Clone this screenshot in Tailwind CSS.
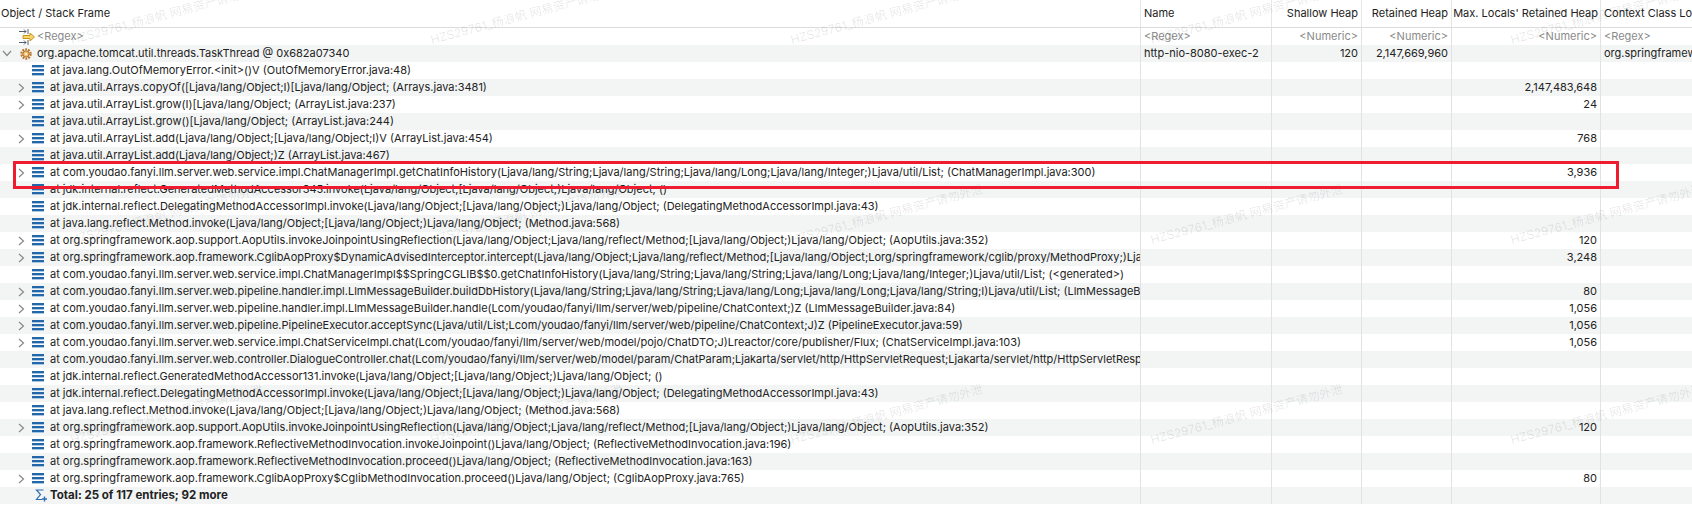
<!DOCTYPE html>
<html lang="en">
<head>
    <meta charset="UTF-8"/>
    <title>Thread Overview</title>
    <script src="https://cdn.jsdelivr.net/npm/@tailwindcss/browser@4"></script>
</head>
<body class="bg-white overflow-hidden">
<div class="relative w-[1692px] h-[506px] overflow-hidden font-['Inter','Noto_Sans_CJK_SC',sans-serif] text-[11px] text-[#222]">
    <!-- Header -->
    <div class="grid grid-cols-[1141px_131px_90px_90px_149px_91px] h-[28px] border-b border-[#dcdcdc]">
        <div class="flex items-center pl-[1px] border-r border-[#e6e6e6] whitespace-nowrap">Object / Stack Frame</div>
        <div class="flex items-center pl-[3px] border-r border-[#e6e6e6] whitespace-nowrap">Name</div>
        <div class="flex items-center justify-end pr-[3px] border-r border-[#e6e6e6] whitespace-nowrap">Shallow Heap</div>
        <div class="flex items-center justify-end pr-[3px] border-r border-[#e6e6e6] whitespace-nowrap">Retained Heap</div>
        <div class="flex items-center justify-end pr-[2px] border-r border-[#e6e6e6] whitespace-nowrap">Max. Locals' Retained Heap</div>
        <div class="flex items-center pl-[3px] overflow-hidden whitespace-nowrap">Context Class Loader</div>
    </div>

    <div class="rows"></div>

    <!-- Watermarks -->
    <div class="watermarks absolute inset-0 pointer-events-none"></div>

    <!-- Red highlight box -->
    <div class="absolute left-[13px] top-[161px] w-[1606px] h-[28px] border-[3px] border-[#ee1c2e]"></div>
</div>

<script>
    const listIcon = `<svg width="12" height="11" viewBox="0 0 12 11" class="shrink-0"><g fill="#2467a8"><rect width="12" height="2"/><rect y="4" width="12" height="2"/><rect y="8" width="12" height="2"/></g><g fill="#a9c6e2"><rect y="2" width="12" height="1"/><rect y="6" width="12" height="1"/><rect y="10" width="12" height="1"/></g></svg>`;
    const chevronRight = `<svg width="7" height="10" viewBox="0 0 7 10" class="block"><path d="M1 1l4.5 4L1 9" fill="none" stroke="#888" stroke-width="1.2"/></svg>`;
    const chevronDown = `<svg width="10" height="7" viewBox="0 0 10 7" class="block"><path d="M1 1l4 4.5L9 1" fill="none" stroke="#888" stroke-width="1.2"/></svg>`;
    const gearIcon = `<svg width="12" height="12" viewBox="0 0 12 12" class="shrink-0"><circle cx="6" cy="6" r="4.6" fill="none" stroke="#b9772b" stroke-width="2.2" stroke-dasharray="1.8 1.1"/><circle cx="6" cy="6" r="3.2" fill="#f0c070" stroke="#9a5c1c" stroke-width=".8"/><circle cx="6" cy="6" r="1.1" fill="#fff6e0"/></svg>`;
    const regexIcon = `<svg width="17" height="16" viewBox="0 0 17 16" class="shrink-0"><g fill="none" stroke="#55606c" stroke-width="1"><path d="M0 2.5h7M5 .5l2 2-2 2M9 0v5"/><path d="M0 13.5h7M5 11.5l2 2-2 2M9 11v5"/></g><path d="M4 6.5h7V4l4.5 4-4.5 4V9.5H4z" fill="#f5d76e" stroke="#c8951e" stroke-width="1"/></svg>`;
    const sumIcon = `<svg width="13" height="13" viewBox="0 0 13 13" class="shrink-0"><path d="M8.5 1H1.5l4 4.5-4 5h5.5" fill="none" stroke="#2f6fb0" stroke-width="1.2"/><path d="M9.5 7.5v5M7 10h5" stroke="#2f6fb0" stroke-width="1.4"/></svg>`;

    // text, has children, max locals retained heap
    const frames = [
      ["at java.lang.OutOfMemoryError.&lt;init&gt;()V (OutOfMemoryError.java:48)", false, ""],
      ["at java.util.Arrays.copyOf([Ljava/lang/Object;I)[Ljava/lang/Object; (Arrays.java:3481)", true, "2,147,483,648"],
      ["at java.util.ArrayList.grow(I)[Ljava/lang/Object; (ArrayList.java:237)", true, "24"],
      ["at java.util.ArrayList.grow()[Ljava/lang/Object; (ArrayList.java:244)", false, ""],
      ["at java.util.ArrayList.add(Ljava/lang/Object;[Ljava/lang/Object;I)V (ArrayList.java:454)", true, "768"],
      ["at java.util.ArrayList.add(Ljava/lang/Object;)Z (ArrayList.java:467)", false, ""],
      ["at com.youdao.fanyi.llm.server.web.service.impl.ChatManagerImpl.getChatInfoHistory(Ljava/lang/String;Ljava/lang/String;Ljava/lang/Long;Ljava/lang/Integer;)Ljava/util/List; (ChatManagerImpl.java:300)", true, "3,936"],
      ["at jdk.internal.reflect.GeneratedMethodAccessor345.invoke(Ljava/lang/Object;[Ljava/lang/Object;)Ljava/lang/Object; ()", false, ""],
      ["at jdk.internal.reflect.DelegatingMethodAccessorImpl.invoke(Ljava/lang/Object;[Ljava/lang/Object;)Ljava/lang/Object; (DelegatingMethodAccessorImpl.java:43)", false, ""],
      ["at java.lang.reflect.Method.invoke(Ljava/lang/Object;[Ljava/lang/Object;)Ljava/lang/Object; (Method.java:568)", false, ""],
      ["at org.springframework.aop.support.AopUtils.invokeJoinpointUsingReflection(Ljava/lang/Object;Ljava/lang/reflect/Method;[Ljava/lang/Object;)Ljava/lang/Object; (AopUtils.java:352)", true, "120"],
      ["at org.springframework.aop.framework.CglibAopProxy$DynamicAdvisedInterceptor.intercept(Ljava/lang/Object;Ljava/lang/reflect/Method;[Ljava/lang/Object;Lorg/springframework/cglib/proxy/MethodProxy;)Ljava/lang/Object; (CglibAopProxy.java:716)", true, "3,248"],
      ["at com.youdao.fanyi.llm.server.web.service.impl.ChatManagerImpl$$SpringCGLIB$$0.getChatInfoHistory(Ljava/lang/String;Ljava/lang/String;Ljava/lang/Long;Ljava/lang/Integer;)Ljava/util/List; (&lt;generated&gt;)", false, ""],
      ["at com.youdao.fanyi.llm.server.web.pipeline.handler.impl.LlmMessageBuilder.buildDbHistory(Ljava/lang/String;Ljava/lang/String;Ljava/lang/Long;Ljava/lang/Long;Ljava/lang/String;I)Ljava/util/List; (LlmMessageBuilder.java:120)", true, "80"],
      ["at com.youdao.fanyi.llm.server.web.pipeline.handler.impl.LlmMessageBuilder.handle(Lcom/youdao/fanyi/llm/server/web/pipeline/ChatContext;)Z (LlmMessageBuilder.java:84)", true, "1,056"],
      ["at com.youdao.fanyi.llm.server.web.pipeline.PipelineExecutor.acceptSync(Ljava/util/List;Lcom/youdao/fanyi/llm/server/web/pipeline/ChatContext;J)Z (PipelineExecutor.java:59)", true, "1,056"],
      ["at com.youdao.fanyi.llm.server.web.service.impl.ChatServiceImpl.chat(Lcom/youdao/fanyi/llm/server/web/model/pojo/ChatDTO;J)Lreactor/core/publisher/Flux; (ChatServiceImpl.java:103)", true, "1,056"],
      ["at com.youdao.fanyi.llm.server.web.controller.DialogueController.chat(Lcom/youdao/fanyi/llm/server/web/model/param/ChatParam;Ljakarta/servlet/http/HttpServletRequest;Ljakarta/servlet/http/HttpServletResponse;)V (DialogueController.java:60)", false, ""],
      ["at jdk.internal.reflect.GeneratedMethodAccessor131.invoke(Ljava/lang/Object;[Ljava/lang/Object;)Ljava/lang/Object; ()", false, ""],
      ["at jdk.internal.reflect.DelegatingMethodAccessorImpl.invoke(Ljava/lang/Object;[Ljava/lang/Object;)Ljava/lang/Object; (DelegatingMethodAccessorImpl.java:43)", false, ""],
      ["at java.lang.reflect.Method.invoke(Ljava/lang/Object;[Ljava/lang/Object;)Ljava/lang/Object; (Method.java:568)", false, ""],
      ["at org.springframework.aop.support.AopUtils.invokeJoinpointUsingReflection(Ljava/lang/Object;Ljava/lang/reflect/Method;[Ljava/lang/Object;)Ljava/lang/Object; (AopUtils.java:352)", true, "120"],
      ["at org.springframework.aop.framework.ReflectiveMethodInvocation.invokeJoinpoint()Ljava/lang/Object; (ReflectiveMethodInvocation.java:196)", false, ""],
      ["at org.springframework.aop.framework.ReflectiveMethodInvocation.proceed()Ljava/lang/Object; (ReflectiveMethodInvocation.java:163)", false, ""],
      ["at org.springframework.aop.framework.CglibAopProxy$CglibMethodInvocation.proceed()Ljava/lang/Object; (CglibAopProxy.java:765)", true, "80"],
    ];

    function row(index, tree, name, shallow, retained, locals, loader, muted) {
      const bg = index % 2 === 1 ? "bg-[#f3f5f5]" : "bg-white";
      const tone = muted ? "text-[#8a8a8a]" : "";
      return `
        <div class="grid grid-cols-[1141px_131px_90px_90px_149px_91px] h-[17px] leading-[17px] ${bg} ${tone}">
          <div class="flex items-center overflow-hidden whitespace-nowrap border-r border-[#e2e2e2]">${tree}</div>
          <div class="pl-[3px] border-r border-[#e2e2e2] whitespace-nowrap overflow-hidden">${name}</div>
          <div class="pr-[3px] text-right border-r border-[#e2e2e2]">${shallow}</div>
          <div class="pr-[3px] text-right border-r border-[#e2e2e2]">${retained}</div>
          <div class="pr-[3px] text-right border-r border-[#e2e2e2]">${locals}</div>
          <div class="pl-[3px] whitespace-nowrap overflow-hidden">${loader}</div>
        </div>`;
    }

    let html = row(0,
      `<span class="ml-[19px] mr-[1px] flex shrink-0">${regexIcon}</span><span>&lt;Regex&gt;</span>`,
      "&lt;Regex&gt;", "&lt;Numeric&gt;", "&lt;Numeric&gt;", "&lt;Numeric&gt;", "&lt;Regex&gt;", true);

    html += row(1,
      `<span class="ml-[2px] w-[10px] flex shrink-0 justify-center">${chevronDown}</span><span class="ml-[8px] mr-[5px] flex shrink-0">${gearIcon}</span><span>org.apache.tomcat.util.threads.TaskThread @ 0x682a07340</span>`,
      "http-nio-8080-exec-2", "120", "2,147,669,960", "", "org.springframework.boot.loader.LaunchedClassLoader");

    frames.forEach((frame, i) => {
      const chevron = frame[1] ? chevronRight : "";
      html += row(i + 2,
        `<span class="ml-[18px] w-[14px] flex shrink-0">${chevron}</span>${listIcon}<span class="ml-[6px]">${frame[0]}</span>`,
        "", "", "", frame[2], "");
    });

    html += row(27,
      `<span class="ml-[35px] mr-[2px] flex shrink-0">${sumIcon}</span><span class="font-bold text-[11.5px]">Total: 25 of 117 entries; 92 more</span>`,
      "", "", "", "", "");

    document.querySelector(".rows").innerHTML = html;

    // Company watermark repeats on a fixed grid
    let marks = "";
    [48, 248, 448].forEach((y) => {
      [73, 433, 793, 1153, 1513].forEach((x) => {
        marks += `<span class="absolute origin-bottom-left -rotate-[15deg] whitespace-nowrap text-[12px] leading-[16px] text-black/10" style="left:${x}px;top:${y - 16}px">HZS29761_杨浪帆 网易资产请勿外泄</span>`;
      });
    });
    document.querySelector(".watermarks").innerHTML = marks;
</script>
</body>
</html>
